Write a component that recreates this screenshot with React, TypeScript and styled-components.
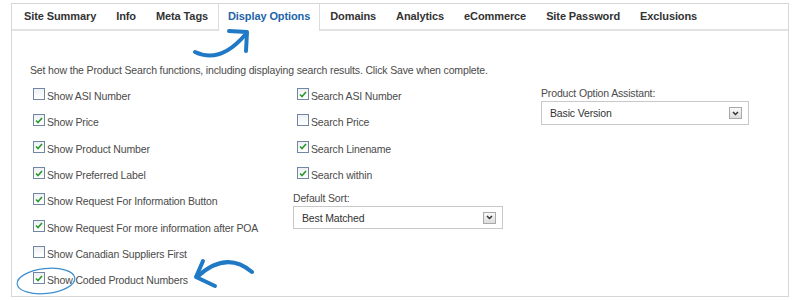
import styled, { createGlobalStyle } from "styled-components";

const GlobalStyle = createGlobalStyle`
  html, body {
    margin: 0;
    padding: 0;
    background: #fff;
  }
  body {
    font-family: "Liberation Sans", Arial, sans-serif;
  }
`;

const Page = styled.div`
  position: relative;
  width: 800px;
  height: 300px;
  padding: 3px 0 0 11px;
  box-sizing: border-box;
  overflow: hidden;
`;

const Panel = styled.div`
  width: 778px;
  height: 294px;
  border: 1px solid #d6d6d6;
  box-sizing: border-box;
  background: #fff;
`;

const TabBar = styled.div`
  display: flex;
  height: 25px;
  padding-left: 2px;
  border-bottom: 2px solid #e2e2e2;
`;

const Tab = styled.div<{ $active?: boolean }>`
  padding: 0 ${(p) => (p.$active ? "9px" : "10px")};
  line-height: 25px;
  height: ${(p) => (p.$active ? "27px" : "25px")};
  font-size: 11px;
  font-weight: bold;
  letter-spacing: -0.1px;
  color: ${(p) => (p.$active ? "#2265a9" : "#333")};
  background: #fff;
  border-left: ${(p) => (p.$active ? "1px solid #dcdcdc" : "none")};
  border-right: ${(p) => (p.$active ? "1px solid #dcdcdc" : "none")};
  white-space: nowrap;
`;

const Content = styled.div`
  display: grid;
  grid-template-columns: 263px 248px 1fr;
  padding: 32px 0 0 18px;
  font-size: 10.5px;
  letter-spacing: -0.15px;
  color: #4a4a4a;
`;

const Intro = styled.div`
  grid-column: 1 / -1;
  line-height: 14px;
  margin-bottom: 6px;
`;

const Column = styled.div<{ $indent?: number; $top?: number }>`
  display: flex;
  flex-direction: column;
  padding-left: ${(p) => p.$indent ?? 0}px;
  padding-top: ${(p) => p.$top ?? 0}px;
`;

const Row = styled.label`
  display: flex;
  align-items: center;
  height: 26.3px;
  white-space: nowrap;
`;

const Box = styled.span`
  display: inline-flex;
  align-items: center;
  justify-content: center;
  width: 12px;
  height: 12px;
  box-sizing: border-box;
  margin: 0 2px 4px 0;
  border: 1px solid #6f87a3;
  background: linear-gradient(#eef0f3, #ffffff);
`;

const FieldLabel = styled.div`
  line-height: 14px;
  margin-bottom: 1px;
`;

const SortLabel = styled(FieldLabel)`
  margin-top: 3px;
`;

const Select = styled.div<{ $width: number; $height: number }>`
  display: flex;
  align-items: center;
  justify-content: space-between;
  width: ${(p) => p.$width}px;
  height: ${(p) => p.$height}px;
  box-sizing: border-box;
  padding: 0 6px 0 8px;
  border: 1px solid #c9c9c9;
  background: #fff;
  color: #333;
  font-size: 10.5px;
`;

const DropButton = styled.span`
  display: inline-flex;
  align-items: center;
  justify-content: center;
  width: 13px;
  height: 12px;
  box-sizing: border-box;
  border: 1px solid #a9a9a9;
  background: linear-gradient(#fafafa, #dcdcdc);
`;

const Overlay = styled.svg`
  position: absolute;
  left: 0;
  top: 0;
  pointer-events: none;
`;

function Check({ checked, label }: { checked?: boolean; label: string }) {
  return (
    <Row>
      <Box>
        {checked && (
          <svg width="8" height="7" viewBox="0 0 8 7">
            <path d="M1 3.5 L3 5.5 L7 1" fill="none" stroke="#2b9a2b" strokeWidth="1.6" />
          </svg>
        )}
      </Box>
      {label}
    </Row>
  );
}

function Dropdown({ value, width, height }: { value: string; width: number; height: number }) {
  return (
    <Select $width={width} $height={height}>
      <span>{value}</span>
      <DropButton>
        <svg width="7" height="5" viewBox="0 0 7 5">
          <path d="M1 1 L3.5 3.5 L6 1" fill="none" stroke="#333" strokeWidth="1.5" />
        </svg>
      </DropButton>
    </Select>
  );
}

const tabs = [
  "Site Summary",
  "Info",
  "Meta Tags",
  "Display Options",
  "Domains",
  "Analytics",
  "eCommerce",
  "Site Password",
  "Exclusions",
];

export default function App() {
  return (
    <>
      <GlobalStyle />
      <Page>
        <Panel>
          <TabBar>
            {tabs.map((t) => (
              <Tab key={t} $active={t === "Display Options"}>
                {t}
              </Tab>
            ))}
          </TabBar>
          <Content>
            <Intro>
              Set how the Product Search functions, including displaying search results. Click Save when complete.
            </Intro>
            <Column $indent={3}>
              <Check label="Show ASI Number" />
              <Check checked label="Show Price" />
              <Check checked label="Show Product Number" />
              <Check checked label="Show Preferred Label" />
              <Check checked label="Show Request For Information Button" />
              <Check checked label="Show Request For more information after POA" />
              <Check label="Show Canadian Suppliers First" />
              <Check checked label="Show Coded Product Numbers" />
            </Column>
            <Column>
              <Column $indent={4}>
                <Check checked label="Search ASI Number" />
                <Check label="Search Price" />
                <Check checked label="Search Linename" />
                <Check checked label="Search within" />
              </Column>
              <SortLabel>Default Sort:</SortLabel>
              <Dropdown value="Best Matched" width={210} height={23} />
            </Column>
            <Column $top={3}>
              <FieldLabel>Product Option Assistant:</FieldLabel>
              <Dropdown value="Basic Version" width={208} height={24} />
            </Column>
          </Content>
        </Panel>
        <Overlay width="800" height="300" viewBox="0 0 800 300">
          <g fill="none" stroke="#1f79c5" strokeWidth="4" strokeLinecap="round" strokeLinejoin="round">
            <path d="M195 52 Q220 64 245 35" />
            <path d="M229 31 L247 32 L246 51" />
            <path d="M197 277 Q226 250 252 272" />
            <path d="M203 261 L196 277 L215 286" />
          </g>
          <ellipse
            cx="46"
            cy="281"
            rx="29"
            ry="12.5"
            transform="rotate(-6 46 281)"
            fill="none"
            stroke="#3d8fd0"
            strokeWidth="1.2"
          />
        </Overlay>
      </Page>
    </>
  );
}
